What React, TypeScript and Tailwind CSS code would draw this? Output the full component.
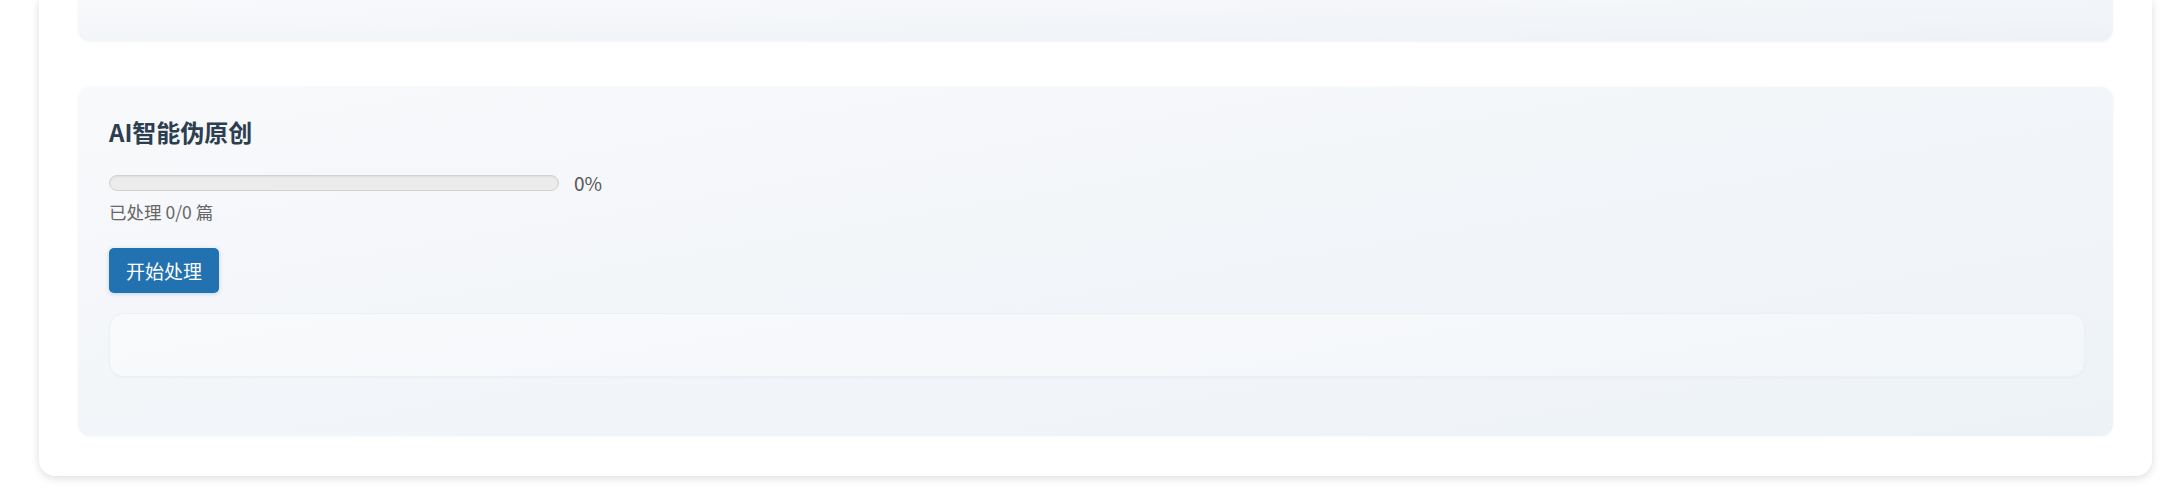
import { useState } from "react";

export default function App() {
  const [processed] = useState(0);
  const [total] = useState(0);
  const percent = total > 0 ? Math.round((processed / total) * 100) : 0;

  return (
    <div className="min-h-[492px] bg-white pb-[15px] font-['Noto_Sans_CJK_SC',sans-serif]">
      {/* Outer panel (scrolled, top cut off) */}
      <div className="ml-[39px] mr-[19px] rounded-b-[16px] bg-white px-[39px] pb-[40px] shadow-[0_2px_8px_rgba(0,0,0,0.14)]">
        {/* Previous section - only its bottom is visible */}
        <div className="h-[41px] rounded-b-[12px] bg-linear-to-br from-[#f8f9fb] to-[#eef2f7] shadow-[0_1px_3px_rgba(0,0,0,0.05)]" />

        {/* AI rewrite section */}
        <section className="mt-[46px] rounded-[12px] bg-linear-to-br from-[#f8f9fb] to-[#edf2f7] pl-[31px] pr-[28px] pt-[28px] pb-[59px] shadow-[0_0_3px_rgba(0,0,0,0.05)]">
          <h3 className="text-[24px] font-bold leading-[34px] text-[#2c3e50]">
            AI智能伪原创
          </h3>

          {/* Progress */}
          <div className="mt-[22px] flex h-[24px] items-center gap-[15px]">
            <div className="h-[16px] w-[450px] overflow-hidden rounded-full border border-[#d2d2d2] bg-[#ececec] shadow-[inset_0_1px_2px_rgba(0,0,0,0.06)]">
              <div
                className="h-full bg-[#2271b1]"
                style={{ width: `${percent}%` }}
              />
            </div>
            <span className="text-[19px] leading-[24px] text-[#555]">
              {percent}%
            </span>
          </div>
          <p className="mt-[5px] text-[17.5px] leading-[24px] text-[#666]">
            已处理 {processed}/{total} 篇
          </p>

          <button className="mt-[24px] block h-[45px] rounded-[5px] bg-[#2271b1] px-[17px] text-[19px] leading-[45px] text-white shadow-[0_1px_4px_rgba(34,113,177,0.25)]">
            开始处理
          </button>

          {/* Result log */}
          <div className="mt-[20px] h-[64px] rounded-[14px] border border-[#eceff3] bg-white/35 shadow-[0_1px_2px_rgba(0,0,0,0.03)]" />
        </section>
      </div>
    </div>
  );
}
